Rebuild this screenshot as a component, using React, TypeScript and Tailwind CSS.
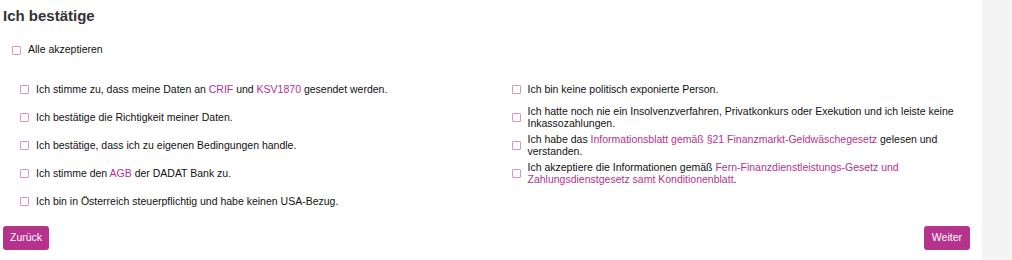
const left = [
  <>Ich stimme zu, dass meine Daten an <a className="text-[#b4318d]">CRIF</a> und <a className="text-[#b4318d]">KSV1870</a> gesendet werden.</>,
  <>Ich bestätige die Richtigkeit meiner Daten.</>,
  <>Ich bestätige, dass ich zu eigenen Bedingungen handle.</>,
  <>Ich stimme den <a className="text-[#b4318d]">AGB</a> der DADAT Bank zu.</>,
  <>Ich bin in Österreich steuerpflichtig und habe keinen USA-Bezug.</>,
];

const right = [
  <>Ich bin keine politisch exponierte Person.</>,
  <>Ich hatte noch nie ein Insolvenzverfahren, Privatkonkurs oder Exekution und ich leiste keine Inkassozahlungen.</>,
  <>
    Ich habe das <a className="text-[#b4318d]">Informationsblatt gemäß §21 Finanzmarkt-Geldwäschegesetz</a>{" "}
    <span>gelesen und</span> <span>verstanden.</span>
  </>,
  <>
    Ich akzeptiere die Informationen gemäß <a className="text-[#b4318d]">Fern-Finanzdienstleistungs-Gesetz und</a>{" "}
    <a className="text-[#b4318d]">Zahlungsdienstgesetz samt Konditionenblatt</a>.
  </>,
];

function Box() {
  return <span className="w-[9px] h-[9px] shrink-0 border border-[#d896c6] rounded-[1px] bg-white" />;
}

function Row({ children }: { children: React.ReactNode }) {
  return (
    <label className="flex items-center h-[28px] gap-[7px]">
      <Box />
      <span className="leading-[12px]">{children}</span>
    </label>
  );
}

export default function App() {
  return (
    <div className="flex w-[1012px] h-[260px] text-[10.5px] text-[#111] font-['Liberation_Sans',Arial,sans-serif]">
      <main className="w-[982px] bg-white pl-[3px] pr-[12px] pt-[7px]">
        <h1 className="text-[15px] font-bold text-[#333] leading-[18px]">Ich bestätige</h1>

        <label className="flex items-center gap-[7px] ml-[9px] mt-[20px] h-[10px]">
          <Box />
          <span>Alle akzeptieren</span>
        </label>

        <div className="grid grid-cols-2 mt-[20px]">
          <div className="pl-[17px]">
            {left.map((t, i) => <Row key={i}>{t}</Row>)}
          </div>
          <div className="pl-[25px] pr-[6px]">
            {right.map((t, i) => <Row key={i}>{t}</Row>)}
          </div>
        </div>

        <div className="flex justify-between mt-[11px]">
          <button className="h-[24px] px-[7px] rounded-[3px] bg-[#b5338d] text-white text-[10.5px]">Zurück</button>
          <button className="h-[24px] px-[8px] rounded-[3px] bg-[#b5338d] text-white text-[10.5px]">Weiter</button>
        </div>
      </main>
      <div className="flex-1 bg-[#f4f4f4]" />
    </div>
  );
}
